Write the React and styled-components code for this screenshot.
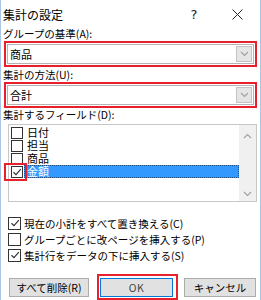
import React, { useState } from "react";
import styled, { createGlobalStyle } from "styled-components";

const GlobalStyle = createGlobalStyle`
  html, body {
    margin: 0;
    padding: 0;
    background: #fff;
  }
  body {
    font-family: "Noto Sans CJK JP", "Noto Sans", sans-serif;
    font-size: 10.5px;
    color: #000;
  }
`;

const FIELDS = [
  { name: "日付", checked: false },
  { name: "担当", checked: false },
  { name: "商品", checked: false },
  { name: "金額", checked: true, selected: true },
];

const OPTIONS = [
  { label: "現在の小計をすべて置き換える(C)", checked: true },
  { label: "グループごとに改ページを挿入する(P)", checked: false },
  { label: "集計行をデータの下に挿入する(S)", checked: true },
];

const Chevron = ({ up }) => (
  <svg width="9" height="6" viewBox="0 0 9 6">
    <path
      d={up ? "M1 5 L4.5 1.5 L8 5" : "M1 1 L4.5 4.5 L8 1"}
      fill="none"
      stroke="#a0a0a0"
      strokeWidth="1.1"
    />
  </svg>
);

const Tick = () => (
  <svg width="10" height="10" viewBox="0 0 10 10">
    <path d="M1.5 5.2 L4 7.6 L8.8 2.2" fill="none" stroke="#333" strokeWidth="1.2" />
  </svg>
);

const CloseIcon = () => (
  <svg width="11" height="11" viewBox="0 0 11 11">
    <path d="M0.5 0.5 L10.5 10.5 M10.5 0.5 L0.5 10.5" stroke="#222" strokeWidth="1" />
  </svg>
);

const App = () => {
  const [group] = useState("商品");
  const [method] = useState("合計");

  return (
    <>
      <GlobalStyle />
      <Window>
        <TitleBar>
          <Title>集計の設定</Title>
          <TitleButton>?</TitleButton>
          <TitleButton $wide>
            <CloseIcon />
          </TitleButton>
        </TitleBar>
        <Body>
          <Label>グループの基準(A):</Label>
          <RedFrame>
            <Combo>
              <ComboText>{group}</ComboText>
              <ComboArrow>
                <Chevron />
              </ComboArrow>
            </Combo>
          </RedFrame>

          <Label $top={2}>集計の方法(U):</Label>
          <RedFrame>
            <Combo>
              <ComboText>{method}</ComboText>
              <ComboArrow>
                <Chevron />
              </ComboArrow>
            </Combo>
          </RedFrame>

          <Label $top={1}>集計するフィールド(D):</Label>
          <ListBox>
            <ListItems>
              {FIELDS.map((f) => (
                <ListRow key={f.name}>
                  <ItemBoxWrap $marked={f.selected}>
                    <ItemBox>{f.checked && <Tick />}</ItemBox>
                  </ItemBoxWrap>
                  <ItemText $selected={f.selected}>{f.name}</ItemText>
                </ListRow>
              ))}
            </ListItems>
            <ScrollBar>
              <Chevron up />
              <Chevron />
            </ScrollBar>
          </ListBox>

          <Options>
            {OPTIONS.map((o) => (
              <OptionRow key={o.label}>
                <OptionBox>{o.checked && <Tick />}</OptionBox>
                <span>{o.label}</span>
              </OptionRow>
            ))}
          </Options>

          <ButtonRow>
            <Button $width={80}>すべて削除(R)</Button>
            <OkFrame>
              <Button $width={73} $primary>
                OK
              </Button>
            </OkFrame>
            <Button $width={72}>キャンセル</Button>
          </ButtonRow>
        </Body>
      </Window>
    </>
  );
};

export default App;

const Window = styled.div`
  width: 261px;
  height: 300px;
  box-sizing: border-box;
  border-left: 1px solid #a9c6e6;
  border-right: 1px solid #a9c6e6;
  background: #fff;
  display: flex;
  flex-direction: column;
  overflow: hidden;
`;

const TitleBar = styled.div`
  height: 28px;
  display: flex;
  align-items: center;
  padding-left: 2px;
  font-size: 12px;
`;

const Title = styled.div`
  flex: 1;
`;

const TitleButton = styled.div`
  width: ${(p) => (p.$wide ? 46 : 40)}px;
  display: flex;
  align-items: center;
  justify-content: center;
  font-size: 13px;
  font-family: "DejaVu Sans", sans-serif;
  color: #222;
`;

const Body = styled.div`
  display: flex;
  flex-direction: column;
  padding: 0 3px 0 2px;
`;

const Label = styled.div`
  height: 12px;
  line-height: 12px;
  margin-top: ${(p) => p.$top || 0}px;
  margin-bottom: 1px;
  white-space: nowrap;
`;

const RedFrame = styled.div`
  margin-left: 1px;
  border: 2px solid #e8202c;
  padding: 1px;
`;

const Combo = styled.div`
  height: 18px;
  border: 1px solid #b4b4b4;
  display: flex;
  align-items: center;
  background: #fff;
`;

const ComboText = styled.div`
  flex: 1;
  padding-left: 2px;
  font-size: 11px;
`;

const ComboArrow = styled.div`
  width: 16px;
  height: 16px;
  margin-right: 1px;
  background: #e5e5e5;
  border: 1px solid #c4c4c4;
  box-sizing: border-box;
  display: flex;
  align-items: center;
  justify-content: center;
`;

const ListBox = styled.div`
  margin: 2px 0 0 5px;
  height: 78px;
  border: 1px solid #c7c7c7;
  display: flex;
  box-sizing: border-box;
`;

const ListItems = styled.div`
  flex: 1;
  padding-top: 1px;
  display: flex;
  flex-direction: column;
`;

const ListRow = styled.div`
  height: 13px;
  display: flex;
  align-items: center;
`;

const ItemBoxWrap = styled.div`
  position: relative;
  z-index: 1;
  width: 23px;
  flex-shrink: 0;
  box-sizing: border-box;
  display: flex;
  align-items: center;
  padding-left: 5px;
  margin-left: -5px;
  margin-right: -3px;
  border: 2px solid ${(p) => (p.$marked ? "#e8202c" : "transparent")};
  height: ${(p) => (p.$marked ? 18 : 13)}px;
  margin-top: ${(p) => (p.$marked ? -2 : 0)}px;
  margin-bottom: ${(p) => (p.$marked ? -3 : 0)}px;
`;

const ItemBox = styled.div`
  width: 12px;
  height: 12px;
  box-sizing: border-box;
  border: 1px solid #333;
  background: #fff;
  display: flex;
  align-items: center;
  justify-content: center;
  flex-shrink: 0;
`;

const ItemText = styled.div`
  flex: 1;
  height: 13px;
  line-height: 11px;
  padding-left: 2px;
  box-sizing: border-box;
  font-size: 11px;
  background: ${(p) => (p.$selected ? "#3399ff" : "transparent")};
  color: ${(p) => (p.$selected ? "#fff" : "#000")};
  border: 1px dotted ${(p) => (p.$selected ? "#1c4f86" : "transparent")};
`;

const ScrollBar = styled.div`
  width: 17px;
  background: #f0f0f0;
  display: flex;
  flex-direction: column;
  align-items: center;
  justify-content: space-between;
  padding: 8px 0 4px;
`;

const Options = styled.div`
  display: flex;
  flex-direction: column;
  margin-top: 13px;
  padding-left: 5px;
`;

const OptionRow = styled.div`
  height: 16px;
  display: flex;
  align-items: center;
  gap: 3px;
  white-space: nowrap;
`;

const OptionBox = styled.div`
  width: 13px;
  height: 13px;
  box-sizing: border-box;
  border: 1px solid #333;
  background: #fff;
  display: flex;
  align-items: center;
  justify-content: center;
`;

const ButtonRow = styled.div`
  display: flex;
  align-items: center;
  margin-top: 11px;
  padding-left: 6px;
`;

const OkFrame = styled.div`
  margin-left: 8px;
  margin-right: 6px;
  border: 2px solid #e8202c;
  padding: 2px 3px 1px 1px;
`;

const Button = styled.div`
  width: ${(p) => p.$width}px;
  height: 19px;
  box-sizing: border-box;
  background: #e1e1e1;
  border: 1px solid ${(p) => (p.$primary ? "#0078d7" : "#adadad")};
  display: flex;
  align-items: center;
  justify-content: center;
  font-size: 10.5px;
  color: ${(p) => (p.$primary ? "#444" : "#000")};
  letter-spacing: ${(p) => (p.$primary ? "0.5px" : "0")};
`;
